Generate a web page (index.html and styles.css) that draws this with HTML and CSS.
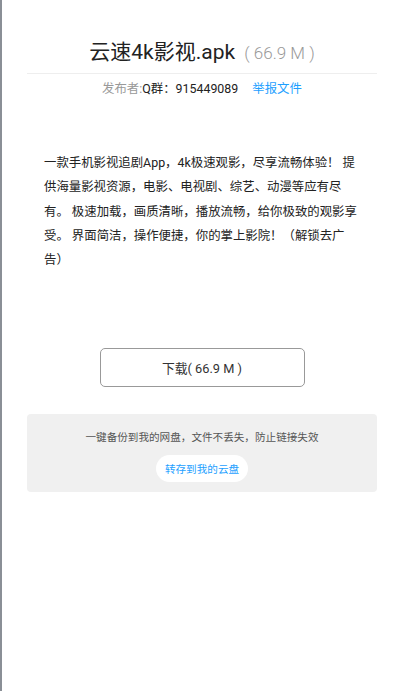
FILE: index.html
```html
<!DOCTYPE html>
<html lang="zh-CN">
    <head>
        <meta charset="utf-8">
        <meta name="viewport" content="width=device-width, initial-scale=1">
        <title>云速4k影视.apk</title>
        <link rel="stylesheet" href="styles.css">
    </head>
    <body>
        <div class="page">
            <div class="head">
                <h1 class="file-name">云速4k影视.apk <span class="file-size">( 66.9 M )</span></h1>
            </div>
            <div class="meta">
                <span class="meta-label">发布者:</span><span class="meta-user">Q群：915449089</span>
                <a class="report" href="#">举报文件</a>
            </div>
            <p class="desc">一款手机影视追剧App，4k极速观影，尽享流畅体验！ 提供海量影视资源，电影、电视剧、综艺、动漫等应有尽有。 极速加载，画质清晰，播放流畅，给你极致的观影享受。 界面简洁，操作便捷，你的掌上影院！（解锁去广告）</p>
            <div class="actions">
                <a class="download" href="#">下载( 66.9 M )</a>
            </div>
            <div class="backup">
                <div class="backup-tip">一键备份到我的网盘，文件不丢失，防止链接失效</div>
                <a class="save" href="#">转存到我的云盘</a>
            </div>
        </div>
    </body>
</html>
```

FILE: styles.css
```css
body {
    margin: 0;
    font-family: Roboto, "Noto Sans CJK SC", sans-serif;
    color: #333;
    background: #fff;
}
a {
    text-decoration: none;
}
.page {
    min-height: 100vh;
    box-sizing: border-box;
    border-left: 2px solid #8a8f96;
    padding: 0 23px 0 25px;
}
.head {
    padding-top: 38px;
    padding-bottom: 6px;
    border-bottom: 1px solid #eee;
    text-align: center;
}
.file-name {
    margin: 0;
    font-size: 21px;
    line-height: 28px;
    font-weight: normal;
    color: #222;
}
.file-size {
    margin-left: 4px;
    font-size: 17px;
    font-weight: 300;
    color: #999;
}
.meta {
    margin-top: 6px;
    text-align: center;
    font-size: 12.4px;
    line-height: 18px;
}
.meta-label {
    color: #999;
}
.meta-user {
    color: #222;
}
.report {
    margin-left: 11px;
    color: #1e9fff;
}
.desc {
    margin: 53px 0 0;
    padding: 0 17px;
    font-size: 12.4px;
    line-height: 24.3px;
    color: #222;
}
.actions {
    display: flex;
    justify-content: center;
    margin-top: 76px;
}
.download {
    width: 205px;
    height: 39px;
    box-sizing: border-box;
    border: 1px solid #999;
    border-radius: 5px;
    display: flex;
    align-items: center;
    justify-content: center;
    font-size: 12.8px;
    color: #333;
}
.backup {
    margin-top: 27px;
    background: #f0f0f0;
    border-radius: 4px;
    padding: 16px 0 10px;
    display: flex;
    flex-direction: column;
    align-items: center;
}
.backup-tip {
    font-size: 10.6px;
    line-height: 16px;
    color: #555;
}
.save {
    margin-top: 9px;
    width: 92px;
    height: 27px;
    border-radius: 14px;
    background: #fff;
    display: flex;
    align-items: center;
    justify-content: center;
    font-size: 10.6px;
    color: #1e9fff;
}
```
